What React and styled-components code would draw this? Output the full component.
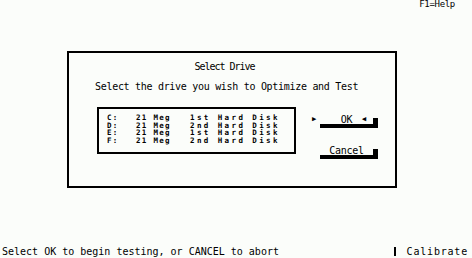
import React from 'react';
import styled, { createGlobalStyle } from 'styled-components';

const GlobalStyle = createGlobalStyle`
  html, body {
    margin: 0;
    padding: 0;
    background: #fbfdfa;
  }
  body {
    font-family: "DejaVu Sans Mono", "Liberation Mono", monospace;
    color: #000;
  }
`;

const Screen = styled.div`
  width: 472px;
  height: 258px;
  display: flex;
  flex-direction: column;
  overflow: hidden;
`;

const TopBar = styled.div`
  height: 9px;
  display: flex;
  justify-content: flex-end;
  padding-right: 17px;
  font-size: 9px;
  line-height: 9px;
  letter-spacing: -0.3px;
`;

const Dialog = styled.div`
  box-sizing: border-box;
  width: 330px;
  height: 137px;
  margin: 42px 0 0 67px;
  border: 2px solid #000;
  display: flex;
  flex-direction: column;
  font-size: 10px;
  letter-spacing: -0.3px;
`;

const Title = styled.div`
  margin-top: 9px;
  padding-right: 15px;
  text-align: center;
  line-height: 10px;
  letter-spacing: -1px;
`;

const Prompt = styled.div`
  margin-top: 10px;
  padding-left: 26px;
  line-height: 10px;
  white-space: pre;
`;

const Body = styled.div`
  display: flex;
  margin-top: 15px;
  padding-left: 28px;
`;

const DriveList = styled.div`
  box-sizing: border-box;
  width: 199px;
  height: 47px;
  border: 2px solid #000;
  padding: 5px 0 0 8px;
  display: grid;
  grid-template-columns: 29px 54px auto;
  grid-auto-rows: 7.6px;
  line-height: 7.6px;
  font-size: 7.5px;
  font-weight: bold;
  letter-spacing: 1.3px;
  white-space: pre;
`;

const Cell = styled.span`
  letter-spacing: ${p => (p.wide ? '2.4px' : 'inherit')};
`;

const Buttons = styled.div`
  display: flex;
  flex-direction: column;
  gap: 18px;
  margin-left: 24px;
  padding-top: 8px;
`;

const Button = styled.div`
  position: relative;
  width: 58px;
  display: flex;
  flex-direction: column;
`;

const FaceRow = styled.div`
  display: flex;
  align-items: flex-end;
`;

const Face = styled.div`
  width: 53px;
  height: 9px;
  line-height: 9px;
  text-align: center;
  white-space: pre;
`;

const SideShadow = styled.div`
  width: 5px;
  height: 6px;
  background: #000;
`;

const BottomShadow = styled.div`
  width: 58px;
  height: 4px;
  background: #000;
`;

const Marker = styled.span`
  position: absolute;
  top: 1px;
  font-size: 7px;
  line-height: 7px;
  left: ${p => (p.side === 'left' ? '-8px' : '42px')};
`;

const StatusBar = styled.div`
  margin-top: auto;
  height: 11px;
  display: flex;
  align-items: flex-start;
  font-size: 10px;
  line-height: 10px;
  white-space: pre;
`;

const StatusText = styled.div`
  padding-left: 2px;
  flex: 1;
`;

const Divider = styled.div`
  width: 2px;
  height: 9px;
  background: #000;
  margin: 0 11px 0 0;
`;

const Mode = styled.div`
  padding-right: 4px;
  letter-spacing: 0.8px;
`;

const drives = [
  ['C:', '21 Meg', '1st Hard Disk'],
  ['D:', '21 Meg', '2nd Hard Disk'],
  ['E:', '21 Meg', '1st Hard Disk'],
  ['F:', '21 Meg', '2nd Hard Disk'],
];

const DosButton = ({ label, focused }) => (
  <Button>
    {focused && <Marker side="left">▶</Marker>}
    {focused && <Marker side="right">◀</Marker>}
    <FaceRow>
      <Face>{label}</Face>
      <SideShadow />
    </FaceRow>
    <BottomShadow />
  </Button>
);

const App = () => {
  return (
    <Screen>
      <GlobalStyle />
      <TopBar>F1=Help</TopBar>
      <Dialog>
        <Title>Select Drive</Title>
        <Prompt>Select the drive you wish to Optimize and Test</Prompt>
        <Body>
          <DriveList>
            {drives.map(d =>
              d.map((cell, i) => (
                <Cell key={d[0] + i} wide={i === 2}>
                  {cell}
                </Cell>
              ))
            )}
          </DriveList>
          <Buttons>
            <DosButton label="OK" focused />
            <DosButton label="Cancel" />
          </Buttons>
        </Body>
      </Dialog>
      <StatusBar>
        <StatusText>Select OK to begin testing, or CANCEL to abort</StatusText>
        <Divider />
        <Mode>Calibrate</Mode>
      </StatusBar>
    </Screen>
  );
};

export default App;
